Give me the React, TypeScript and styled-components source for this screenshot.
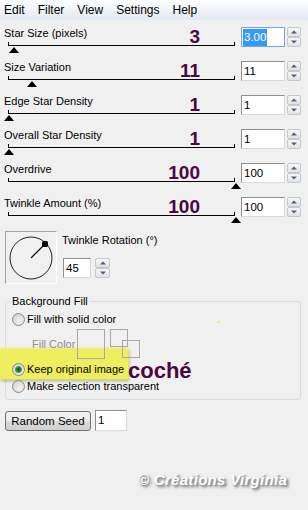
import styled, { createGlobalStyle, css } from 'styled-components';

const GlobalStyle = createGlobalStyle`
  html, body {
    margin: 0;
    padding: 0;
    background: #f0f0f0;
  }
  body {
    font-family: "Liberation Sans", Arial, sans-serif;
    font-size: 11px;
    color: #000;
  }
`;

const Window = styled.div`
  width: 308px;
  height: 510px;
  overflow: hidden;
  background: #f0f0f0;
  display: flex;
  flex-direction: column;
`;

const MenuBar = styled.nav`
  height: 20px;
  display: flex;
  align-items: center;
  gap: 13px;
  padding-left: 4px;
  font-size: 12px;
  line-height: 14px;
  background: linear-gradient(#fdfeff, #e3e9f1);
`;

const SliderList = styled.div`
  display: flex;
  flex-direction: column;
  padding-top: 7px;
`;

const SliderRow = styled.div`
  display: flex;
  align-items: flex-start;
  height: 34px;
  padding-left: 4px;
`;

const SliderBlock = styled.div`
  position: relative;
  width: 237px;
`;

const Label = styled.div`
  line-height: 13px;
  height: 13px;
  white-space: nowrap;
`;

const Track = styled.div`
  position: relative;
  margin-left: 4px;
  width: 227px;
  height: 5px;
  border-bottom: 1px solid #000;

  &::before,
  &::after {
    content: '';
    position: absolute;
    bottom: 0;
    width: 1px;
    height: 3px;
    background: #000;
  }
  &::before {
    left: 0;
  }
  &::after {
    right: 0;
  }
`;

const Thumb = styled.span`
  position: absolute;
  top: calc(100% + 2px);
  width: 0;
  height: 0;
  border-left: 5px solid transparent;
  border-right: 5px solid transparent;
  border-bottom: 6px solid #000;
  transform: translateX(-50%);
`;

const Note = styled.span<{ $size?: number }>`
  position: absolute;
  font-weight: bold;
  color: #4a0840;
  font-size: ${(p) => p.$size ?? 19}px;
  line-height: ${(p) => p.$size ?? 19}px;
  white-space: nowrap;
`;

const SliderNote = styled(Note)`
  right: 41px;
  top: 0;
`;

const ValueBox = styled.div<{ $width: number; $height?: number; $focused?: boolean }>`
  box-sizing: border-box;
  width: ${(p) => p.$width}px;
  height: ${(p) => p.$height ?? 20}px;
  background: #fff;
  border: 1px solid;
  border-color: #8e8f8f #d9d9d9 #d9d9d9 #8e8f8f;
  padding-left: 2px;
  font-size: 11.5px;
  line-height: ${(p) => (p.$height ?? 20) - 2}px;
  white-space: nowrap;
  ${(p) =>
    p.$focused &&
    css`
      border-color: #6fa8e4;
      padding-left: 1px;
    `}
`;

const Selected = styled.span`
  display: inline-block;
  background: #3399ff;
  color: #fff;
  padding: 0 1px;
  line-height: 17px;
`;

const Spinner = styled.div<{ $gap?: number; $width?: number }>`
  display: flex;
  flex-direction: column;
  margin-left: ${(p) => p.$gap ?? 2}px;
  width: ${(p) => p.$width ?? 14}px;
  height: 20px;
`;

const SpinButton = styled.div<{ $down?: boolean }>`
  position: relative;
  flex: 1;
  box-sizing: border-box;
  border: 1px solid #c3c9d1;
  border-radius: 2px;
  background: linear-gradient(#f7f7f7, #e2e2e2);

  &::after {
    content: '';
    position: absolute;
    left: 50%;
    top: 50%;
    transform: translate(-50%, -50%);
    border-left: 3px solid transparent;
    border-right: 3px solid transparent;
    ${(p) =>
      p.$down
        ? css`
            border-top: 3px solid #4c6183;
          `
        : css`
            border-bottom: 3px solid #4c6183;
          `}
  }
`;

const TwinkleSection = styled.div`
  display: flex;
  padding-left: 5px;
  height: 53px;
`;

const DialBox = styled.div`
  box-sizing: border-box;
  width: 52px;
  height: 53px;
  border: 1px solid;
  border-color: #a0a0a0 #ffffff #ffffff #a0a0a0;
`;

const TwinkleControls = styled.div`
  display: flex;
  flex-direction: column;
  margin-left: 5px;
  padding-top: 3px;
`;

const ValueRow = styled.div`
  display: flex;
  align-items: center;
  margin-top: 11px;
  margin-left: 1px;
`;

const Group = styled.div`
  position: relative;
  z-index: 0;
  margin: 17px 7px 0 5px;
  border: 1px solid #d5dfe5;
  border-radius: 3px;
  padding: 11px 0 6px 6px;
  display: flex;
  flex-direction: column;
`;

const Legend = styled.span`
  position: absolute;
  top: -7px;
  left: 4px;
  padding: 0 2px;
  line-height: 13px;
  background: #f0f0f0;
`;

const Highlight = styled.span`
  position: absolute;
  z-index: -1;
  left: -6px;
  top: 47px;
  width: 128px;
  height: 30px;
  background: #eeee5e;
  box-shadow: 0 0 2px 1px rgba(236, 236, 90, 0.85), 1px 2px 3px rgba(0, 0, 0, 0.3);
`;

const Speck = styled.span`
  position: absolute;
  left: 211px;
  top: 19px;
  width: 3px;
  height: 2px;
  border-radius: 50%;
  background: #eaea6a;
`;

const CocheNote = styled(Note)`
  left: 122px;
  top: 58px;
`;

const RadioRow = styled.label<{ $gap?: number }>`
  display: flex;
  align-items: center;
  height: 13px;
  line-height: 13px;
  margin-top: ${(p) => p.$gap ?? 0}px;
  white-space: nowrap;
`;

const Radio = styled.span<{ $checked?: boolean }>`
  position: relative;
  box-sizing: border-box;
  width: 13px;
  height: 13px;
  border-radius: 50%;
  border: 1px solid #8a8a8a;
  background: radial-gradient(circle at 60% 65%, #f4f4f4 0%, #d6d6d6 70%, #c2c2c2 100%);
  margin-right: 2px;
  flex-shrink: 0;

  ${(p) =>
    p.$checked &&
    css`
      &::after {
        content: '';
        position: absolute;
        left: 2px;
        top: 2px;
        width: 7px;
        height: 7px;
        border-radius: 50%;
        background: radial-gradient(circle at 50% 50%, #0f4d16 0%, #2a8a36 45%, #8cd88f 100%);
      }
    `}
`;

const FillColorRow = styled.div`
  display: flex;
  align-items: center;
  height: 30px;
  margin-top: 3px;
  padding-left: 20px;
`;

const FillLabel = styled.span`
  width: 45px;
  color: #8d8d8d;
  white-space: nowrap;
`;

const Swatch = styled.span`
  box-sizing: border-box;
  width: 28px;
  height: 30px;
  border: 1px solid #a8a8a8;
`;

const SwatchPair = styled.span`
  position: relative;
  width: 30px;
  height: 30px;
  margin-left: 5px;
`;

const SmallSwatch = styled.span<{ $back?: boolean }>`
  position: absolute;
  box-sizing: border-box;
  width: 18px;
  height: 18px;
  border: 1px solid #a8a8a8;
  left: ${(p) => (p.$back ? 12 : 0)}px;
  top: ${(p) => (p.$back ? 11 : 0)}px;
`;

const SeedRow = styled.div`
  display: flex;
  align-items: center;
  margin-top: 10px;
  padding-left: 5px;
  height: 21px;
`;

const Button = styled.button`
  box-sizing: border-box;
  width: 86px;
  height: 20px;
  margin: 0 4px 0 0;
  padding: 0;
  font-family: inherit;
  font-size: 11.5px;
  color: #000;
  border: 1px solid #707070;
  border-radius: 3px;
  background: linear-gradient(#f2f2f2 0%, #ebebeb 50%, #dddddd 51%, #cfcfcf 100%);
`;

const Watermark = styled.div`
  margin-top: 40px;
  padding-left: 138px;
  font-size: 15px;
  line-height: 18px;
  font-weight: bold;
  font-style: italic;
  letter-spacing: 0.3px;
  color: #fff;
  text-shadow: 1px 1px 0 #a0a0a0, 2px 2px 3px #555;
  white-space: nowrap;
`;

type SliderSpec = {
  label: string;
  value: string;
  pos: number;
  note: string;
  focused?: boolean;
};

const sliders: SliderSpec[] = [
  { label: 'Star Size (pixels)', value: '3.00', pos: 3, note: '3', focused: true },
  { label: 'Size Variation', value: '11', pos: 11, note: '11' },
  { label: 'Edge Star Density', value: '1', pos: 1, note: '1' },
  { label: 'Overall Star Density', value: '1', pos: 1, note: '1' },
  { label: 'Overdrive', value: '100', pos: 100, note: '100' },
  { label: 'Twinkle Amount (%)', value: '100', pos: 100, note: '100' },
];

const Spin = ({ gap, width }: { gap?: number; width?: number }) => (
  <Spinner $gap={gap} $width={width}>
    <SpinButton />
    <SpinButton $down />
  </Spinner>
);

const Dial = () => (
  <svg width='50' height='51' viewBox='0 0 50 51'>
    <circle cx='25' cy='26' r='21' fill='none' stroke='#222' strokeWidth='1' />
    <line x1='25' y1='26' x2='39' y2='12' stroke='#111' strokeWidth='1.2' />
    <rect x='36' y='9' width='6' height='6' rx='1.5' fill='#000' />
  </svg>
);

const App = () => {
  return (
    <>
      <GlobalStyle />
      <Window>
        <MenuBar>
          <span>Edit</span>
          <span>Filter</span>
          <span>View</span>
          <span>Settings</span>
          <span>Help</span>
        </MenuBar>

        <SliderList>
          {sliders.map((s) => (
            <SliderRow key={s.label}>
              <SliderBlock>
                <Label>{s.label}</Label>
                <Track>
                  <Thumb style={{ left: `calc(${((s.pos - 1) / 99) * 100}% + 1px)` }} />
                </Track>
                <SliderNote>{s.note}</SliderNote>
              </SliderBlock>
              <ValueBox $width={44} $focused={s.focused}>
                {s.focused ? <Selected>{s.value}</Selected> : s.value}
              </ValueBox>
              <Spin />
            </SliderRow>
          ))}
        </SliderList>

        <TwinkleSection>
          <DialBox>
            <Dial />
          </DialBox>
          <TwinkleControls>
            <Label>Twinkle Rotation (°)</Label>
            <ValueRow>
              <ValueBox $width={28}>45</ValueBox>
              <Spin gap={4} width={15} />
            </ValueRow>
          </TwinkleControls>
        </TwinkleSection>

        <Group>
          <Legend>Background Fill</Legend>
          <Highlight />
          <Speck />
          <RadioRow>
            <Radio />
            Fill with solid color
          </RadioRow>
          <FillColorRow>
            <FillLabel>Fill Color</FillLabel>
            <Swatch />
            <SwatchPair>
              <SmallSwatch />
              <SmallSwatch $back />
            </SwatchPair>
          </FillColorRow>
          <RadioRow $gap={4}>
            <Radio $checked />
            Keep original image
          </RadioRow>
          <RadioRow $gap={4}>
            <Radio />
            Make selection transparent
          </RadioRow>
          <CocheNote $size={22}>coché</CocheNote>
        </Group>

        <SeedRow>
          <Button>Random Seed</Button>
          <ValueBox $width={32} $height={21}>1</ValueBox>
        </SeedRow>

        <Watermark>© Créations Virginia</Watermark>
      </Window>
    </>
  );
};

export default App;
